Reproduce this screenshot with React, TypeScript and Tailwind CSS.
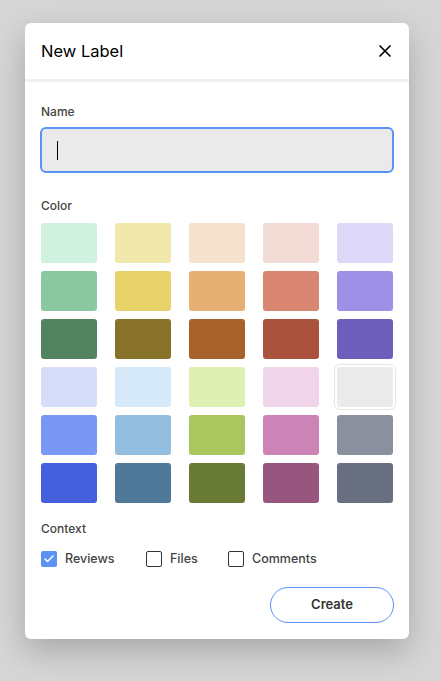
import { X, Check } from 'lucide-react'

const swatches = [
  ['#d0f0e0', '#f1e8ab', '#f4e2cf', '#f2dbd5', '#ddd8f8'],
  ['#8bc89f', '#e8d36a', '#e6b074', '#d88672', '#9e90e6'],
  ['#548361', '#89732a', '#a8622b', '#aa523d', '#6d5ebc'],
  ['#d5ddf9', '#d5e9f8', '#dff0b3', '#f0d5ea', '#ebebeb'],
  ['#7a97f5', '#93bedf', '#aac65e', '#cc84b6', '#8b909e'],
  ['#465fdc', '#507898', '#687a36', '#98567f', '#676f81'],
]

const contexts = [
  { label: 'Reviews', checked: true, w: 'w-[105px]' },
  { label: 'Files', checked: false, w: 'w-[82px]' },
  { label: 'Comments', checked: false, w: 'w-auto' },
]

export default function App() {
  return (
    <div className="min-h-screen bg-[#d6d6d6] pt-[23px] pl-[25px]" style={{ fontFamily: 'Inter, "Open Sans", sans-serif' }}>
      <div className="w-[384px] rounded-md bg-white shadow-[0_12px_32px_rgba(0,0,0,0.22)]">
        <div className="flex h-[59px] items-center justify-between px-4 border-b-[3px] border-[#f0f0f0]">
          <h1 className="text-[16.5px] text-black">New Label</h1>
          <X className="w-[20px] h-[20px] text-black -mr-[2px]" strokeWidth={2} />
        </div>

        <div className="px-4 pt-[21px] pb-4">
          <label className="block text-[12px] font-medium text-[#444]">Name</label>
          <div className="-mx-px mt-[6px] flex h-[46px] items-center rounded-md border-2 border-[#5b93f5] bg-[#eaeaea] px-[15px]">
            <div className="h-[19px] w-px bg-black" />
          </div>

          <div className="mt-[24px] text-[12px] font-medium text-[#444]">Color</div>
          <div className="mt-[8px] grid grid-cols-5 gap-x-[18px] gap-y-2">
            {swatches.flat().map((c, i) => (
              <div
                key={i}
                className={`h-10 rounded-[3px] ${i === 19 ? 'ring-1 ring-[#e6e6e6] ring-offset-2' : ''}`}
                style={{ backgroundColor: c }}
              />
            ))}
          </div>

          <div className="mt-[17px] text-[12px] font-medium text-[#444]">Context</div>
          <div className="mt-[12px] flex items-center">
            {contexts.map((c) => (
              <label key={c.label} className={`flex items-center ${c.w}`}>
                {c.checked ? (
                  <span className="flex h-4 w-4 items-center justify-center rounded-[2px] bg-[#5b93f5]">
                    <Check className="h-3 w-3 text-white" strokeWidth={3} />
                  </span>
                ) : (
                  <span className="h-4 w-4 rounded-[2px] border border-[#333] bg-white" />
                )}
                <span className="ml-2 text-[12.5px] font-medium text-[#444]">{c.label}</span>
              </label>
            ))}
          </div>

          <div className="mt-[18px] flex justify-end">
            <button className="h-[36px] w-[124px] rounded-full border border-[#5b93f5] text-[13px] font-semibold text-[#333] -mr-px">
              Create
            </button>
          </div>
        </div>
      </div>
    </div>
  )
}
